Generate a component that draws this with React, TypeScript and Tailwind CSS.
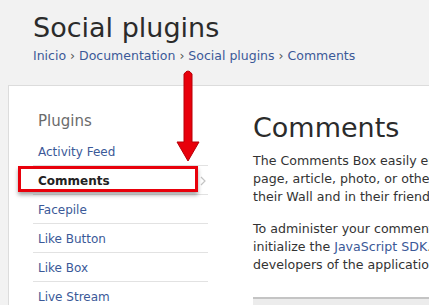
const plugins = ["Activity Feed", "Comments", "Facepile", "Like Button", "Like Box", "Live Stream"];

export default function App() {
  return (
    <div className="relative h-[305px] w-[429px] overflow-hidden bg-[#f2f2f2] font-['DejaVu_Sans',sans-serif] text-[#333]">
      {/* Page header */}
      <header className="pl-[33px] pt-[12px]">
        <h1 className="whitespace-nowrap text-[27px] leading-[32px] text-[#2b2b2b]">Social plugins</h1>
        <nav className="mt-[4px] whitespace-nowrap text-[12.5px] leading-[16px] text-[#3b5998]">
          Inicio <span className="text-[#555]">›</span> Documentation <span className="text-[#555]">›</span> Social plugins{" "}
          <span className="text-[#555]">›</span> Comments
        </nav>
      </header>

      {/* Content panel */}
      <div className="ml-[8px] mt-[21px] flex w-[600px] border-l border-t border-[#dcdcdc] bg-white">
        <aside className="w-[199px] shrink-0 pl-[24px] pt-[25px]">
          <h3 className="mb-[6px] pl-[5px] text-[15px] leading-[20px] text-[#6b6b6b]">Plugins</h3>
          <ul>
            {plugins.map((p) => (
              <li
                key={p}
                className="relative flex h-[29px] items-center border-b border-[#e2e2e2] pl-[5px] pt-[1px] text-[12px]"
              >
                {p === "Comments" ? (
                  <>
                    <span className="font-bold text-[#222]">{p}</span>
                    <svg className="absolute right-[2px] top-[10px]" width="6" height="10" viewBox="0 0 6 10">
                      <polyline points="1,1 5,5 1,9" fill="none" stroke="#c4c4c4" strokeWidth="1.2" />
                    </svg>
                  </>
                ) : (
                  <span className="text-[#3b5998]">{p}</span>
                )}
              </li>
            ))}
          </ul>
        </aside>

        <main className="ml-[45px] w-[300px] pt-[26px]">
          <h2 className="whitespace-nowrap text-[27px] leading-[32px] text-[#2b2b2b]">Comments</h2>
          <div className="mt-[8px] whitespace-nowrap text-[12.6px] leading-[18px] text-[#333]">
            <p>
              The Comments Box easily enables your users to comment on your site's content
              <br />
              page, article, photo, or other piece of content on your site
              <br />
              their Wall and in their friends' streams.
            </p>
            <p className="mt-[14px]">
              To administer your comments box, you need to be listed as an admin,
              <br />
              initialize the <span className="text-[#3b5998]">JavaScript SDK</span>. with your app id, or be one of the
              <br />
              developers of the application.
            </p>
          </div>
          <div className="mt-[23px] h-[40px] border-t-2 border-[#c4c4c4] bg-[#ececec]" />
        </main>
      </div>

      {/* Annotation: red highlight box */}
      <div className="absolute left-[18px] top-[166px] h-[26px] w-[180px] border-[3px] border-[#e8000b] shadow-[0_3px_4px_rgba(0,0,0,0.35)]" />

      {/* Annotation: red arrow */}
      <svg className="absolute left-[174px] top-[68px]" width="28" height="96" viewBox="0 0 28 96">
        <path
          d="M10 6 Q14 0 18 6 L18 74 L25 74 L14 93 L3 74 L10 74 Z"
          fill="#e8000b"
          stroke="#b80008"
          strokeWidth="1"
          strokeLinejoin="round"
        />
      </svg>
    </div>
  );
}
